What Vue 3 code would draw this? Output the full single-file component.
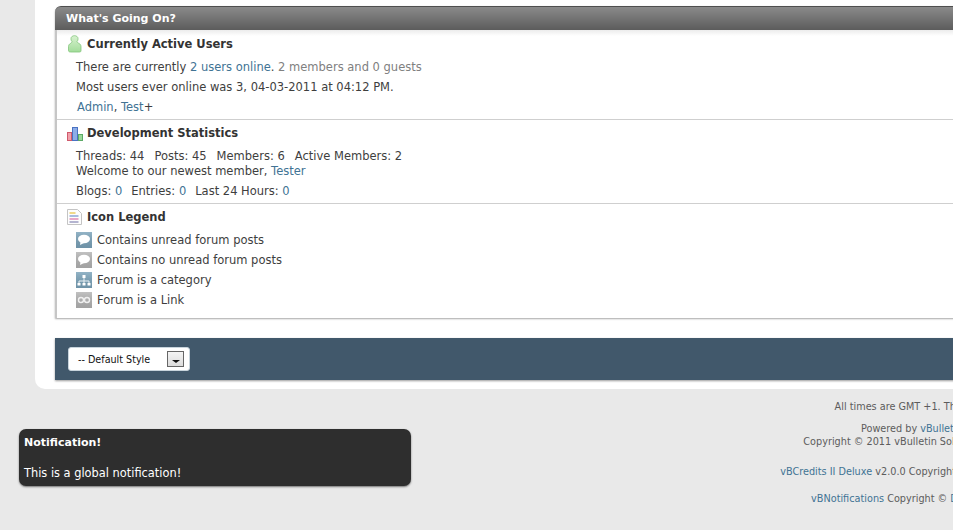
<template>
  <div class="page">
    <div class="wrapper">
      <div class="block">
        <h2 class="block-head">What's Going On?</h2>
        <div class="block-body">
          <section class="sect sect-users">
            <h3 class="sect-title">
              <svg class="sect-icon" width="16" height="18" viewBox="0 0 16 18">
                <defs>
                  <linearGradient id="userFill" x1="0" y1="0" x2="0" y2="1">
                    <stop offset="0" stop-color="#d8f2d0" />
                    <stop offset="1" stop-color="#a2dc9a" />
                  </linearGradient>
                </defs>
                <path d="M5 6.500C4 5.500 4 4.500 4 3.500 4 1.600 5.800.7 7.500.7s3.500.9 3.500 2.800c0 1 0 2-1 3 0 .8.6 1.200 1.800 1.800 1.300.7 2.200 1.700 2.200 3.400v4c0 .9-.6 1.300-1.500 1.300h-9C2.600 17 1.500 16.600 1.500 15.700v-4c0-1.700.9-2.700 2.200-3.400C4.400 7.900 5 7.300 5 6.500z" fill="url(#userFill)" stroke="#82c47a" stroke-width=".8" />
              </svg>
              Currently Active Users
            </h3>
            <p class="line gap-users">There are currently <a>2 users online</a>. <span class="muted">2 members and 0 guests</span></p>
            <p class="line gap-users">Most users ever online was 3, 04-03-2011 at 04:12 PM.</p>
            <p class="line gap-users names"><a>Admin</a>, <a>Test</a>+</p>
          </section>

          <section class="sect sect-stats">
            <h3 class="sect-title">
              <svg class="sect-icon" width="16" height="15" viewBox="0 0 16 15">
                <rect x=".5" y="6.500" width="4" height="8" fill="#f0a0aa" stroke="#cf5a6c" />
                <rect x="5.500" y="1.500" width="5" height="13" fill="#8dade8" stroke="#4a72c2" />
                <rect x="11.500" y="8.500" width="4" height="6" fill="#9ad89a" stroke="#5caa66" />
              </svg>
              Development Statistics
            </h3>
            <p class="line stats-first">
              <span>Threads: 44</span><span>Posts: 45</span><span>Members: 6</span><span>Active Members: 2</span>
            </p>
            <p class="line">Welcome to our newest member, <a>Tester</a></p>
            <p class="line stats-last">
              <span>Blogs: <a>0</a></span><span>Entries: <a>0</a></span><span>Last 24 Hours: <a>0</a></span>
            </p>
          </section>

          <section class="sect sect-legend">
            <h3 class="sect-title legend-title">
              <svg class="sect-icon" width="15" height="16" viewBox="0 0 15 16">
                <path d="M.5.500h10l4 4v11H.5z" fill="#fdfdfd" stroke="#c4c4c4" />
                <rect x="2.500" y="3" width="6" height="2" fill="#f0d98a" />
                <rect x="2.500" y="6" width="9" height="2" fill="#a9bce0" />
                <rect x="2.500" y="9" width="9" height="2" fill="#e8a8c8" />
                <rect x="2.500" y="12" width="9" height="2" fill="#b4b4d0" />
              </svg>
              Icon Legend
            </h3>
            <ul class="legend">
              <li v-for="item in legend" :key="item.text">
                <svg class="legend-icon" width="16" height="16" viewBox="0 0 16 16">
                  <defs>
                    <linearGradient id="iconSheen" x1="0" y1="0" x2="0" y2="1">
                      <stop offset="0" stop-color="#fff" stop-opacity=".18" />
                      <stop offset="1" stop-color="#000" stop-opacity=".1" />
                    </linearGradient>
                  </defs>
                  <rect width="16" height="16" :fill="item.bg" />
                  <rect width="16" height="16" fill="url(#iconSheen)" />
                  <template v-if="item.kind === 'bubble'">
                    <ellipse cx="8" cy="7" rx="6" ry="4.200" fill="#fff" />
                    <path d="M4.500 10l-.5 3L8 11z" fill="#fff" />
                  </template>
                  <template v-else-if="item.kind === 'tree'">
                    <path d="M8 5v4M3 11V9h10v2M8 9v2" fill="none" stroke="#e8f0f4" />
                    <rect x="6.500" y="3" width="3" height="3" fill="#fff" />
                    <rect x="1.500" y="11" width="3" height="2.500" fill="#fff" />
                    <rect x="6.500" y="11" width="3" height="2.500" fill="#fff" />
                    <rect x="11.500" y="11" width="3" height="2.500" fill="#fff" />
                  </template>
                  <template v-else>
                    <circle cx="5" cy="8" r="2.500" fill="none" stroke="#f0f0f0" stroke-width="1.400" />
                    <circle cx="11" cy="8" r="2.500" fill="none" stroke="#f0f0f0" stroke-width="1.400" />
                  </template>
                </svg>
                {{ item.text }}
              </li>
            </ul>
          </section>
        </div>
      </div>

      <div class="footer-bar">
        <div class="style-select">
          <span>-- Default Style</span>
          <span class="select-btn"><i class="select-arrow"></i></span>
        </div>
      </div>
    </div>

    <div class="below">
      <p class="time-line">All times are GMT +1. The time now is 04:13 PM.</p>
      <div class="credits">
        <p>Powered by <a>vBulletin®</a> Version 4.1.10<br />Copyright © 2011 vBulletin Solutions, Inc. All rights reserved.</p>
        <p class="credit-gap"><a>vBCredits II Deluxe</a> v2.0.0 Copyright © 2010, DragonByte Technologies</p>
        <p class="credit-last"><a>vBNotifications</a> Copyright © <a>DragonByte Technologies</a> Ltd.</p>
      </div>
    </div>

    <div class="notification">
      <strong>Notification!</strong>
      <span>This is a global notification!</span>
    </div>
  </div>
</template>

<script setup>
const legend = [
  { text: 'Contains unread forum posts', kind: 'bubble', bg: '#7ba3ba' },
  { text: 'Contains no unread forum posts', kind: 'bubble', bg: '#b4b4b4' },
  { text: 'Forum is a category', kind: 'tree', bg: '#7ba3ba' },
  { text: 'Forum is a Link', kind: 'link', bg: '#b4b4b4' }
];
</script>

<style>
html,
body {
  margin: 0;
  height: 530px;
  overflow: hidden;
  background: #e9e9e9;
}
</style>

<style scoped>
.page {
  position: relative;
  width: 1200px;
  height: 530px;
  font-family: "DejaVu Sans", Verdana, sans-serif;
  font-size: 11.5px;
  color: #3e3e3e;
}

p,
h2,
h3,
ul {
  margin: 0;
  padding: 0;
}

a {
  color: #417394;
}

.wrapper {
  margin-left: 35px;
  padding: 6px 0 9px 20px;
  height: 374px;
  background: #fff;
  border-bottom-left-radius: 10px;
}

.block {
  box-shadow: 0 1px 2px rgba(0, 0, 0, 0.35);
  border-top-left-radius: 6px;
}

.block-head {
  height: 24px;
  padding-left: 11px;
  line-height: 24px;
  font-size: 11px;
  font-weight: bold;
  color: #fff;
  background: linear-gradient(#8a8a8a, #5c5c5c);
  border-top: 1px solid #4e4e4e;
  box-sizing: border-box;
  border-top-left-radius: 6px;
}

.block-body {
  height: 288px;
  box-sizing: border-box;
  border-left: 2px solid #c6c6c6;
  background: linear-gradient(#ececec, #fff 6px);
}

.sect {
  padding-left: 10px;
  box-sizing: border-box;
  border-bottom: 1px solid #cfcfcf;
}

.sect-users {
  height: 90px;
  padding-top: 5px;
}

.sect-stats {
  height: 84px;
  padding-top: 4px;
}

.sect-legend {
  height: 114px;
  padding-top: 4px;
  border-bottom: 0;
}

.sect-title {
  display: flex;
  align-items: center;
  gap: 4px;
  height: 18px;
  font-size: 11.5px;
  color: #333;
}

.legend-title {
  gap: 5px;
}

.sect-icon {
  flex: none;
}

.line {
  padding-left: 9px;
  line-height: 15px;
}

.gap-users {
  margin-top: 5px;
}

.sect-users .line:first-of-type {
  margin-top: 7px;
}

.names {
  padding-left: 10px;
}

.stats-first {
  margin-top: 7px;
  display: flex;
  gap: 10px;
}

.stats-last {
  margin-top: 5px;
  display: flex;
  gap: 9px;
}

.muted {
  color: #808080;
}

.legend {
  list-style: none;
  margin-top: 4px;
  padding-left: 9px;
}

.legend li {
  display: flex;
  align-items: center;
  gap: 5px;
  height: 20px;
}

.legend-icon {
  flex: none;
}

.footer-bar {
  margin-top: 20px;
  height: 42px;
  padding: 9px 0 0 13px;
  box-sizing: border-box;
  background: #41586b;
  box-shadow: 0 1px 2px rgba(0, 0, 0, 0.4);
}

.style-select {
  display: flex;
  align-items: center;
  justify-content: space-between;
  box-sizing: border-box;
  width: 122px;
  height: 24px;
  padding: 0 5px 0 9px;
  font-size: 9.6px;
  color: #111;
  background: #fff;
  border: 1px solid #c8d4dc;
  border-radius: 3px;
}

.select-btn {
  display: flex;
  align-items: center;
  justify-content: center;
  box-sizing: border-box;
  width: 17px;
  height: 16px;
  border: 1px solid #666;
  background: linear-gradient(#f4f4f4, #dcdcdc);
}

.select-arrow {
  margin-top: 5px;
  border: 4px solid transparent;
  border-top: 3px solid #111;
  border-bottom: 0;
}

.below {
  font-size: 9.7px;
  color: #5c5c5c;
  line-height: 13px;
  white-space: nowrap;
}

.time-line {
  margin-top: 11px;
  margin-right: 128px;
  text-align: right;
}

.credits {
  margin-top: 9px;
  padding-left: 706px;
  text-align: center;
}

.credit-gap {
  margin-top: 17px;
}

.credit-last {
  margin-top: 14px;
}

.notification {
  position: absolute;
  left: 19px;
  top: 429px;
  display: flex;
  flex-direction: column;
  gap: 16px;
  box-sizing: border-box;
  width: 392px;
  height: 57px;
  padding: 6px 5px;
  line-height: 15px;
  font-size: 11.4px;
  color: #fff;
  background: #2e2e2e;
  border-radius: 7px;
  box-shadow: 0 1px 2px rgba(0, 0, 0, 0.5);
}

.notification strong {
  font-size: 11px;
}
</style>
